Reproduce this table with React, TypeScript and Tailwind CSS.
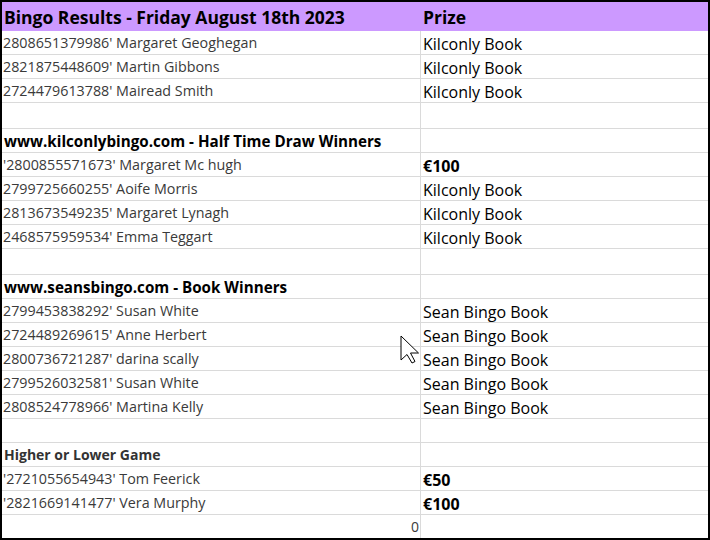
import React from 'react';

type Row = {
  a?: string;
  b?: string;
  kind?: 'name' | 'section' | 'blank' | 'game' | 'zero';
  boldB?: boolean;
  tall?: boolean;
};

const rows: Row[] = [
  { a: "2808651379986' Margaret Geoghegan", b: 'Kilconly Book' },
  { a: "2821875448609' Martin Gibbons", b: 'Kilconly Book' },
  { a: "2724479613788' Mairead Smith", b: 'Kilconly Book' },
  { kind: 'blank', tall: true },
  { a: 'www.kilconlybingo.com - Half Time Draw Winners', kind: 'section' },
  { a: "'2800855571673' Margaret Mc hugh", b: '€100', boldB: true },
  { a: "2799725660255' Aoife Morris", b: 'Kilconly Book' },
  { a: "2813673549235' Margaret Lynagh", b: 'Kilconly Book' },
  { a: "2468575959534' Emma Teggart", b: 'Kilconly Book' },
  { kind: 'blank', tall: true },
  { a: 'www.seansbingo.com - Book Winners', kind: 'section' },
  { a: "2799453838292' Susan White", b: 'Sean Bingo Book' },
  { a: "2724489269615' Anne Herbert", b: 'Sean Bingo Book' },
  { a: "2800736721287' darina scally", b: 'Sean Bingo Book' },
  { a: "2799526032581' Susan White", b: 'Sean Bingo Book' },
  { a: "2808524778966' Martina Kelly", b: 'Sean Bingo Book' },
  { kind: 'blank' },
  { a: 'Higher or Lower Game', kind: 'game' },
  { a: "'2721055654943' Tom Feerick", b: '€50', boldB: true },
  { a: "'2821669141477' Vera Murphy", b: '€100', boldB: true },
];

function CellA({ row }: { row: Row }) {
  if (row.kind === 'section') {
    return (
      <span className="pl-[2px] pt-[1px] text-[15.2px] font-bold text-black font-['Open_Sans',sans-serif] whitespace-nowrap">
        {row.a}
      </span>
    );
  }
  if (row.kind === 'game') {
    return (
      <span className="pl-[2px] text-[14px] font-bold text-[#333333] font-['Open_Sans',sans-serif] whitespace-nowrap">
        {row.a}
      </span>
    );
  }
  return (
    <span className="pl-[1px] text-[14.3px] text-[#3a3a3a] font-['Open_Sans',sans-serif] whitespace-nowrap">
      {row.a}
    </span>
  );
}

export default function App() {
  return (
    <div className="relative w-[710px] h-[540px] border-2 border-black bg-white overflow-hidden">
      {/* header */}
      <div className="flex h-[29px] bg-[#cc99ff] items-center">
        <div className="w-[419px] pl-[2px] pt-[1px] text-[17.5px] font-bold text-black font-['Open_Sans',sans-serif] whitespace-nowrap">
          Bingo Results - Friday August 18th 2023
        </div>
        <div className="pl-[2px] pt-[1px] text-[17.5px] font-bold text-black font-['Open_Sans',sans-serif]">Prize</div>
      </div>

      {rows.map((row, i) => (
        <div
          key={i}
          className={`flex border-b border-[#dadada] ${row.tall ? 'h-[26px]' : 'h-[24px]'}`}
        >
          <div className="w-[419px] flex items-center border-r border-[#dadada] overflow-hidden">
            {row.a && <CellA row={row} />}
          </div>
          <div className="flex-1 flex items-center pt-[2px]">
            {row.b && (
              <span
                className={`pl-[2px] text-[16px] text-black font-['Open_Sans',sans-serif] whitespace-nowrap ${
                  row.boldB ? 'font-bold' : ''
                }`}
              >
                {row.b}
              </span>
            )}
          </div>
        </div>
      ))}

      {/* zero row */}
      <div className="flex h-[23px]">
        <div className="w-[419px] flex items-center justify-end pr-[1px] border-r border-[#dadada] text-[14px] text-[#3a3a3a] font-['Open_Sans',sans-serif]">
          0
        </div>
        <div className="flex-1" />
      </div>

      {/* mouse cursor */}
      <svg
        className="absolute left-[398px] top-[333px]"
        width="22"
        height="30"
        viewBox="0 0 22 30"
      >
        <path
          d="M1 1 L1 25 L7 19.5 L12 28 L15 26.5 L10.5 18 L18.5 18 Z"
          fill="white"
          stroke="black"
          strokeWidth="1"
          strokeLinejoin="miter"
        />
      </svg>
    </div>
  );
}
